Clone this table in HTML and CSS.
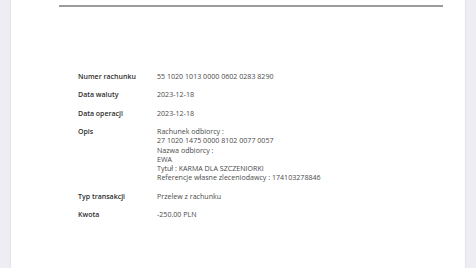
FILE: index.html
```html
<!DOCTYPE html>
<html lang="pl">
<head>
<meta charset="utf-8">
<link rel="stylesheet" href="styles.css">
</head>
<body>
<div class="sheet">
  <div class="rule"></div>
  <div class="details">
    <div class="row"><div class="label">Numer rachunku</div><div class="value">55 1020 1013 0000 0602 0283 8290</div></div>
    <div class="row"><div class="label">Data waluty</div><div class="value">2023-12-18</div></div>
    <div class="row"><div class="label">Data operacji</div><div class="value">2023-12-18</div></div>
    <div class="row"><div class="label">Opis</div><div class="value">Rachunek odbiorcy :<br>27 1020 1475 0000 8102 0077 0057<br>Nazwa odbiorcy :<br>EWA<br>Tytuł : KARMA DLA SZCZENIORKI<br>Referencje własne zleceniodawcy : 174103278846</div></div>
    <div class="row"><div class="label">Typ transakcji</div><div class="value">Przelew z rachunku</div></div>
    <div class="row"><div class="label">Kwota</div><div class="value">-250.00 PLN</div></div>
  </div>
</div>
</body>
</html>
```
FILE: styles.css
```css
html, body {
  margin: 0;
  padding: 0;
  height: 100%;
}
body {
  background: #eeedf4;
  font-family: "Open Sans", "Noto Sans", sans-serif;
  overflow: hidden;
}
.sheet {
  margin: 0 10px;
  height: 100%;
  background: #ffffff;
  border-left: 1px solid #e4e3ec;
  border-right: 1px solid #e4e3ec;
  box-sizing: border-box;
  padding-top: 5px;
}
.rule {
  height: 2px;
  background: #9c9c9c;
  margin: 0 22px 0 48px;
}
.details {
  padding: 65px 0 0 67px;
  display: flex;
  flex-direction: column;
  gap: 9.2px;
}
.row {
  display: grid;
  grid-template-columns: 79px 1fr;
  font-size: 7px;
  line-height: 9.2px;
}
.label {
  font-weight: 600;
  color: #2e2e2e;
}
.value {
  font-size: 7.1px;
  color: #4a4a4a;
}
```
